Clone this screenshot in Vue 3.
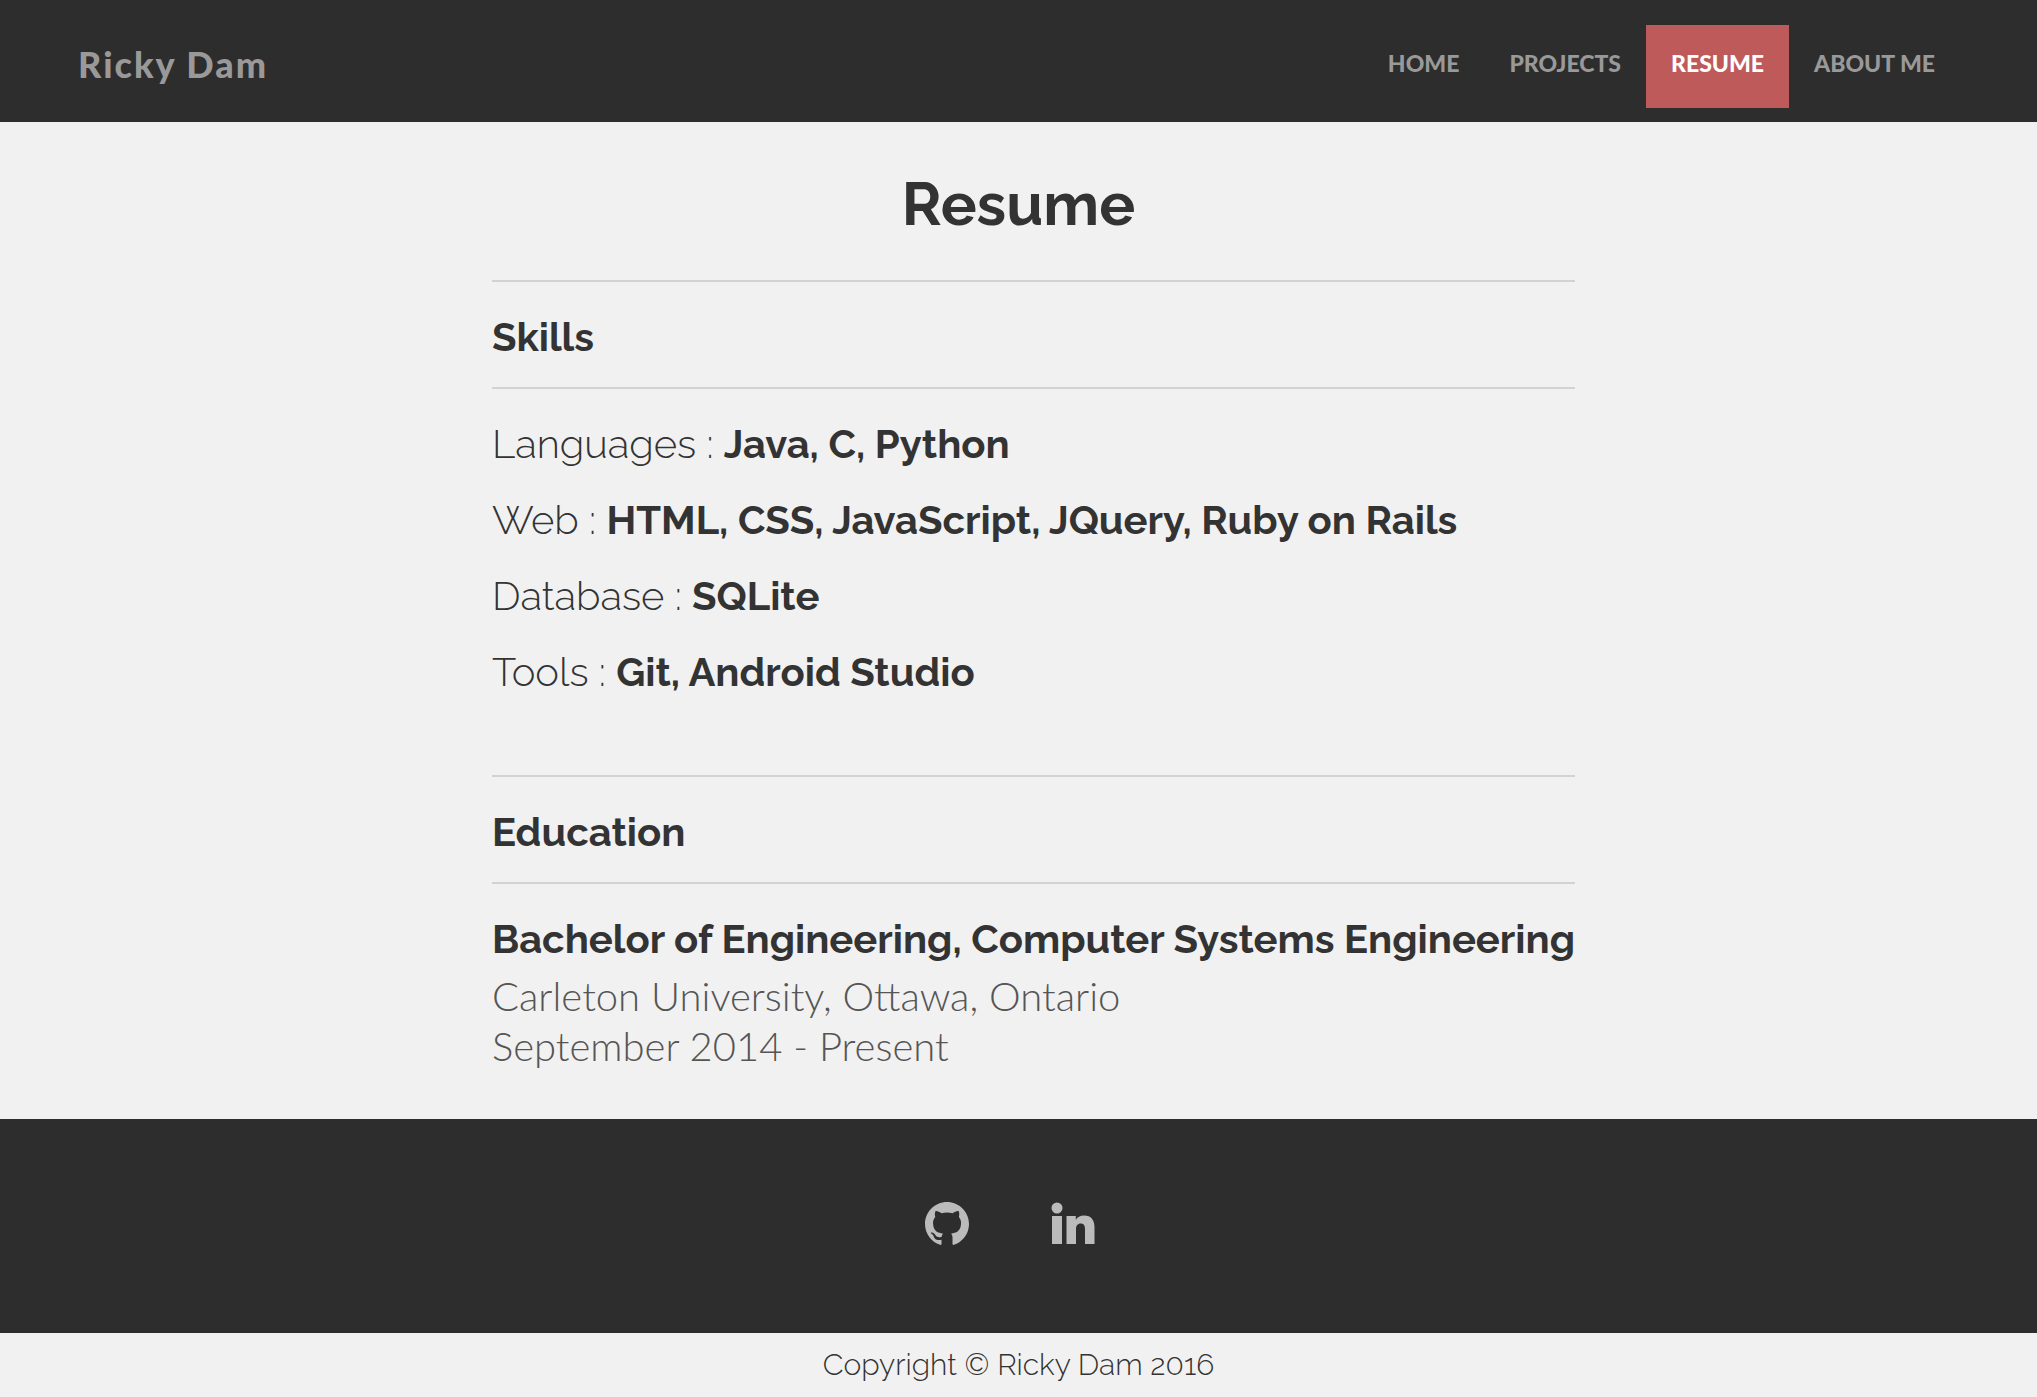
<script setup>
const nav = [
  { label: 'HOME' },
  { label: 'PROJECTS' },
  { label: 'RESUME', active: true },
  { label: 'ABOUT ME' },
]
const skills = [
  { name: 'Languages', items: 'Java, C, Python' },
  { name: 'Web', items: 'HTML, CSS, JavaScript, JQuery, Ruby on Rails' },
  { name: 'Database', items: 'SQLite' },
  { name: 'Tools', items: 'Git, Android Studio' },
]
</script>

<template>
  <div class="page">
    <header class="bar">
      <a class="brand" href="#">Ricky Dam</a>
      <nav class="nav">
        <a v-for="n in nav" :key="n.label" href="#" class="link" :class="{ active: n.active }">{{ n.label }}</a>
      </nav>
    </header>

    <main>
      <h1>Resume</h1>
      <div class="content">
        <section class="skills">
          <h2>Skills</h2>
          <p v-for="s in skills" :key="s.name" class="skill">{{ s.name }} : <b>{{ s.items }}</b></p>
        </section>
        <section class="education">
          <h2>Education</h2>
          <h3>Bachelor of Engineering, Computer Systems Engineering</h3>
          <p class="detail">Carleton University, Ottawa, Ontario</p>
          <p class="detail">September 2014 - Present</p>
        </section>
      </div>
    </main>

    <footer>
      <div class="social">
        <a href="#" aria-label="GitHub">
          <svg width="44" height="44" viewBox="0 0 16 16"><path fill="currentColor" d="M8 0C3.58 0 0 3.58 0 8c0 3.54 2.29 6.53 5.47 7.59.4.07.55-.17.55-.38 0-.19-.01-.82-.01-1.49-2.01.37-2.53-.49-2.69-.94-.09-.23-.48-.94-.82-1.13-.28-.15-.68-.52-.01-.53.63-.01 1.08.58 1.23.82.72 1.21 1.87.87 2.33.66.07-.52.28-.87.51-1.07-1.78-.2-3.64-.89-3.64-3.95 0-.87.31-1.59.82-2.15-.08-.2-.36-1.02.08-2.12 0 0 .67-.21 2.2.82.64-.18 1.32-.27 2-.27s1.36.09 2 .27c1.53-1.04 2.2-.82 2.2-.82.44 1.1.16 1.92.08 2.12.51.56.82 1.27.82 2.15 0 3.07-1.87 3.75-3.65 3.95.29.25.54.73.54 1.48 0 1.07-.01 1.93-.01 2.2 0 .21.15.46.55.38A8.01 8.01 0 0 0 16 8c0-4.42-3.58-8-8-8z" /></svg>
        </a>
        <a href="#" aria-label="LinkedIn">
          <svg width="44" height="44" viewBox="0 0 44 44"><g fill="currentColor"><circle cx="6" cy="6" r="5.500" /><path d="M1 14h10v28H1zM15.500 14h9.300v3.800c1.500-2.500 4.300-4.300 8.200-4.300 7.300 0 10.500 4.500 10.500 12V42h-9.500V27c0-3.500-1.200-5.600-4.300-5.600-3.200 0-4.700 2.300-4.700 5.600v15h-9.500z" /></g></svg>
        </a>
      </div>
      <p class="copyright">Copyright © Ricky Dam 2016</p>
    </footer>
  </div>
</template>

<style>
body {
  background: #f1f1f1;
}
</style>

<style scoped>
.page {
  font-family: Raleway, Lato, sans-serif;
  color: #333;
}
h1, h2, h3, p {
  margin: 0;
}
a {
  color: inherit;
  text-decoration: none;
}
.bar {
  display: flex;
  justify-content: space-between;
  align-items: flex-start;
  padding: 25px 77px 14px 78px;
  background: #2d2d2d;
  color: #999;
  font-family: Lato, sans-serif;
}
.brand {
  font-size: 36px;
  font-weight: 900;
  line-height: 44px;
  padding-top: 17px;
  letter-spacing: 2px;
}
.nav {
  display: flex;
}
.link {
  padding: 24px 25px 31px;
  font-size: 23px;
  font-weight: 900;
  line-height: 28px;
}
.active {
  background: #bf5a5a;
  color: #fff;
}
h1 {
  padding-top: 46px;
  font-size: 60px;
  line-height: 72px;
  text-align: center;
}
.content {
  width: fit-content;
  margin: 40px auto 0;
  padding-left: 30px;
}
h2 {
  padding: 31px 0 26px;
  border-top: 2px solid #d2d2d2;
  border-bottom: 2px solid #d2d2d2;
  font-size: 40px;
  line-height: 48px;
}
.skills {
  padding-bottom: 79px;
}
.skill {
  margin-top: 28px;
  font-size: 40px;
  font-weight: 300;
  line-height: 48px;
}
.skill:first-of-type {
  margin-top: 31px;
}
.skill b {
  font-weight: 700;
}
h3 {
  margin: 31px 0 8px;
  font-size: 40px;
  line-height: 48px;
}
.detail {
  font-family: Lato, sans-serif;
  font-size: 40px;
  font-weight: 300;
  line-height: 50px;
  color: #555;
}
.education {
  padding-bottom: 48px;
}
.social {
  display: flex;
  justify-content: center;
  gap: 82px;
  padding: 83px 17px 87px 0;
  background: #2d2d2d;
  color: #bbb;
}
.social a, .social svg {
  display: block;
}
.copyright {
  padding: 14px 0;
  font-size: 30px;
  font-weight: 300;
  line-height: 36px;
  text-align: center;
}
</style>
